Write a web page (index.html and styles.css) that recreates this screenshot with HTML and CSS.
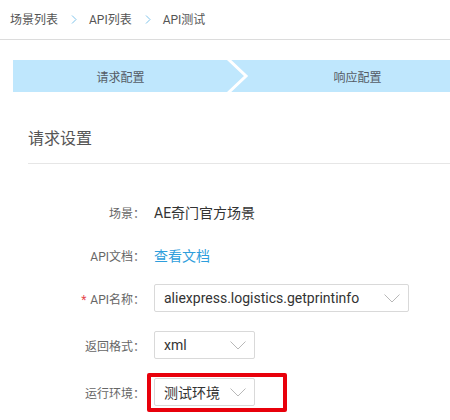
FILE: index.html
```html
<!DOCTYPE html>
<html>
<head>
<meta charset="utf-8">
<link rel="stylesheet" href="styles.css">
</head>
<body>
<div class="crumbs">
  <span class="crumb">场景列表</span>
  <svg class="sep" width="6" height="9" viewBox="0 0 6 9"><polyline points="1,0.5 5,4.5 1,8.5" fill="none" stroke="#7ec3ea" stroke-width="1"/></svg>
  <span class="crumb">API列表</span>
  <svg class="sep" width="6" height="9" viewBox="0 0 6 9"><polyline points="1,0.5 5,4.5 1,8.5" fill="none" stroke="#7ec3ea" stroke-width="1"/></svg>
  <span class="crumb">API测试</span>
</div>

<div class="steps">
  <div class="step step-first">请求配置</div>
  <svg class="step-arrow" width="24" height="32" viewBox="0 0 24 32"><polyline points="1,-1 19,16 1,33" fill="none" stroke="#ffffff" stroke-width="3"/></svg>
  <div class="step step-second">响应配置</div>
</div>

<div class="section">
  <div class="section-title">请求设置</div>
  <div class="form">
    <div class="row row-1">
      <div class="label">场景：</div>
      <div class="value">AE奇门官方场景</div>
    </div>
    <div class="row row-2">
      <div class="label">API文档：</div>
      <div class="value link">查看文档</div>
    </div>
    <div class="row row-sel">
      <div class="label"><span class="req">*</span>API名称：</div>
      <div class="select select-wide">
        <span>aliexpress.logistics.getprintinfo</span>
        <svg class="chev" width="16" height="9" viewBox="0 0 16 9"><polyline points="0.5,0.5 8,8 15.5,0.5" fill="none" stroke="#b8b8b8" stroke-width="1"/></svg>
      </div>
    </div>
    <div class="row row-sel">
      <div class="label">返回格式：</div>
      <div class="select select-small">
        <span>xml</span>
        <svg class="chev" width="16" height="9" viewBox="0 0 16 9"><polyline points="0.5,0.5 8,8 15.5,0.5" fill="none" stroke="#b8b8b8" stroke-width="1"/></svg>
      </div>
    </div>
    <div class="row row-sel">
      <div class="label">运行环境：</div>
      <div class="highlight-wrap">
        <div class="select select-small">
          <span>测试环境</span>
          <svg class="chev" width="16" height="9" viewBox="0 0 16 9"><polyline points="0.5,0.5 8,8 15.5,0.5" fill="none" stroke="#b8b8b8" stroke-width="1"/></svg>
        </div>
        <div class="highlight"></div>
      </div>
    </div>
  </div>
</div>
</body>
</html>
```

FILE: styles.css
```css
html, body {
  margin: 0;
  padding: 0;
  background: #ffffff;
  width: 450px;
  height: 420px;
  overflow: hidden;
  font-family: Roboto, "Noto Sans CJK SC", sans-serif;
  color: #333333;
}

.crumbs {
  height: 39px;
  border-bottom: 1px solid #dcdcdc;
  display: flex;
  align-items: center;
  padding-left: 10px;
  font-size: 12px;
  color: #555555;
}

.crumb {
  line-height: 16px;
}

.sep {
  margin: 0 12px 0 13px;
}

.steps {
  margin: 20px 0 0 13px;
  height: 32px;
  background: #bfe7fd;
  display: flex;
  align-items: center;
  font-size: 12px;
  color: #555c66;
  position: relative;
}

.step-first {
  width: 215px;
  text-align: center;
}

.step-arrow {
  flex: none;
  margin-left: -1px;
}

.step-second {
  flex: 1;
  text-align: center;
  padding-left: 14px;
}

.section {
  margin-left: 28px;
  margin-top: 36px;
}

.section-title {
  font-size: 16px;
  color: #555555;
  line-height: 22px;
  padding-bottom: 13px;
  border-bottom: 1px solid #e6e6e6;
}

.form {
  margin-left: -28px;
  padding-top: 34px;
}

.row {
  display: flex;
  align-items: center;
  height: 28px;
}

.row-1 {
  margin-bottom: 15px;
}

.row-2 {
  margin-bottom: 15px;
}

.row-sel {
  margin-bottom: 19px;
}

.label {
  width: 145px;
  text-align: right;
  font-size: 12px;
  color: #666666;
  margin-right: 9px;
  flex: none;
}

.req {
  color: #e5484d;
  margin-right: 4px;
}

.value {
  font-size: 14px;
  color: #333333;
}

.link {
  color: #2e9edc;
}

.select {
  height: 26px;
  border: 1px solid #d9d9d9;
  border-radius: 2px;
  display: flex;
  align-items: center;
  justify-content: space-between;
  padding: 0 8px 0 9px;
  font-size: 14px;
  color: #333333;
  box-sizing: content-box;
  background: #ffffff;
}

.select-wide {
  width: 236px;
}

.select-small {
  width: 82px;
}

.chev {
  flex: none;
}

.highlight-wrap {
  position: relative;
}

.highlight {
  position: absolute;
  left: -7px;
  top: -5px;
  width: 132px;
  height: 31px;
  border: 4px solid #e8000b;
  border-radius: 2px;
}
```
